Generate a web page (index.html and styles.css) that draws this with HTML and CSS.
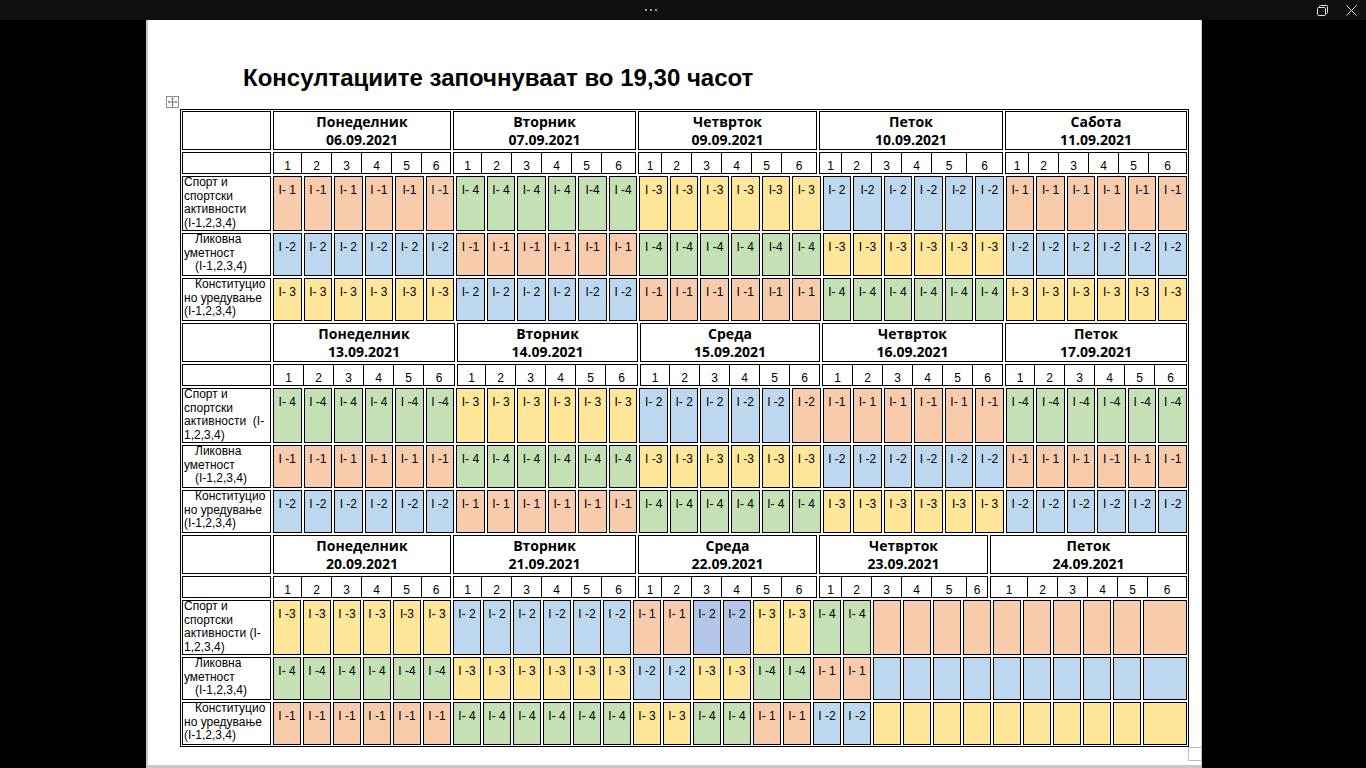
FILE: index.html
```html
<!DOCTYPE html>
<html lang="mk">
<head>
<meta charset="utf-8">
<title>Консултации</title>
<link rel="stylesheet" href="styles.css">
</head>
<body>
<div class="topbar">
  <div class="dots"><i></i><i></i><i></i></div>
  <div class="winctl">
    <svg class="ico" width="11" height="11" viewBox="0 0 11 11"><path d="M2.5 2.5V1.5a1 1 0 0 1 1-1h6a1 1 0 0 1 1 1v6a1 1 0 0 1-1 1H8.5" fill="none" stroke="#e2e2e2"/><rect x="0.5" y="2.5" width="8" height="8" rx="1" fill="none" stroke="#e2e2e2"/></svg>
    <svg class="ico" width="11" height="11" viewBox="0 0 11 11"><path d="M0.5 0.5l10 10M10.5 0.5l-10 10" stroke="#e2e2e2"/></svg>
  </div>
</div>
<div class="page">
  <h1 class="title">Консултациите започнуваат во 19,30 часот</h1>
  <div class="tbl">
    <span class="move"><svg width="11" height="10" viewBox="0 0 11 11"><path d="M5.5 1.5v8M1.5 5.5h8" stroke="#6a6a6a"/><path d="M5.5 0.3L3.9 2h3.2zM5.5 10.7L3.9 9h3.2zM0.3 5.5L2 3.9v3.2zM10.7 5.5L9 3.9v3.2z" fill="#6a6a6a"/></svg></span>

    <div class="sec s1">
      <div class="hrow">
        <div class="cell"></div>
        <div class="cell day">Понеделник<br>06.09.2021</div>
        <div class="cell day">Вторник<br>07.09.2021</div>
        <div class="cell day">Четврток<br>09.09.2021</div>
        <div class="cell day">Петок<br>10.09.2021</div>
        <div class="cell day">Сабота<br>11.09.2021</div>
      </div>
      <div class="hrow nrow">
        <div class="cell"></div>
        <div class="cell nums"><span>1</span><span>2</span><span>3</span><span>4</span><span>5</span><span>6</span></div>
        <div class="cell nums"><span>1</span><span>2</span><span>3</span><span>4</span><span>5</span><span>6</span></div>
        <div class="cell nums f22"><span>1</span><span>2</span><span>3</span><span>4</span><span>5</span><span>6</span></div>
        <div class="cell nums f21"><span>1</span><span>2</span><span>3</span><span>4</span><span>5</span><span>6</span></div>
        <div class="cell nums f22"><span>1</span><span>2</span><span>3</span><span>4</span><span>5</span><span>6</span></div>
      </div>
      <div class="crow r1">
        <div class="cell lab"><div>Спорт и</div><div>спортски</div><div>активности</div><div>(I-1,2,3,4)</div></div>
        <div class="c or">I- 1</div><div class="c or">I -1</div><div class="c or">I- 1</div><div class="c or">I -1</div><div class="c or">I-1</div><div class="c or">I -1</div>
        <div class="c gr">I- 4</div><div class="c gr">I- 4</div><div class="c gr">I- 4</div><div class="c gr">I- 4</div><div class="c gr">I-4</div><div class="c gr">I -4</div>
        <div class="c ye">I -3</div><div class="c ye">I -3</div><div class="c ye">I -3</div><div class="c ye">I -3</div><div class="c ye">I-3</div><div class="c ye">I- 3</div>
        <div class="c bl">I- 2</div><div class="c bl">I-2</div><div class="c bl">I- 2</div><div class="c bl">I -2</div><div class="c bl">I-2</div><div class="c bl">I -2</div>
        <div class="c or">I- 1</div><div class="c or">I- 1</div><div class="c or">I- 1</div><div class="c or">I- 1</div><div class="c or">I-1</div><div class="c or">I -1</div>
      </div>
      <div class="crow r2">
        <div class="cell lab"><div class="ind">Ликовна</div><div>уметност</div><div class="ind">(I-1,2,3,4)</div></div>
        <div class="c bl">I -2</div><div class="c bl">I- 2</div><div class="c bl">I- 2</div><div class="c bl">I -2</div><div class="c bl">I- 2</div><div class="c bl">I -2</div>
        <div class="c or">I -1</div><div class="c or">I -1</div><div class="c or">I -1</div><div class="c or">I- 1</div><div class="c or">I-1</div><div class="c or">I- 1</div>
        <div class="c gr">I -4</div><div class="c gr">I -4</div><div class="c gr">I -4</div><div class="c gr">I- 4</div><div class="c gr">I-4</div><div class="c gr">I- 4</div>
        <div class="c ye">I -3</div><div class="c ye">I -3</div><div class="c ye">I -3</div><div class="c ye">I -3</div><div class="c ye">I -3</div><div class="c ye">I -3</div>
        <div class="c bl">I -2</div><div class="c bl">I -2</div><div class="c bl">I- 2</div><div class="c bl">I -2</div><div class="c bl">I -2</div><div class="c bl">I -2</div>
      </div>
      <div class="crow r3">
        <div class="cell lab"><div class="ind">Конституцио</div><div>но уредување</div><div>(I-1,2,3,4)</div></div>
        <div class="c ye">I- 3</div><div class="c ye">I- 3</div><div class="c ye">I- 3</div><div class="c ye">I- 3</div><div class="c ye">I-3</div><div class="c ye">I -3</div>
        <div class="c bl">I- 2</div><div class="c bl">I- 2</div><div class="c bl">I- 2</div><div class="c bl">I- 2</div><div class="c bl">I-2</div><div class="c bl">I -2</div>
        <div class="c or">I -1</div><div class="c or">I -1</div><div class="c or">I -1</div><div class="c or">I -1</div><div class="c or">I-1</div><div class="c or">I- 1</div>
        <div class="c gr">I- 4</div><div class="c gr">I- 4</div><div class="c gr">I- 4</div><div class="c gr">I- 4</div><div class="c gr">I- 4</div><div class="c gr">I- 4</div>
        <div class="c ye">I- 3</div><div class="c ye">I- 3</div><div class="c ye">I- 3</div><div class="c ye">I- 3</div><div class="c ye">I-3</div><div class="c ye">I -3</div>
      </div>
    </div>

    <div class="sec s2">
      <div class="hrow">
        <div class="cell"></div>
        <div class="cell day">Понеделник<br>13.09.2021</div>
        <div class="cell day">Вторник<br>14.09.2021</div>
        <div class="cell day">Среда<br>15.09.2021</div>
        <div class="cell day">Четврток<br>16.09.2021</div>
        <div class="cell day">Петок<br>17.09.2021</div>
      </div>
      <div class="hrow nrow">
        <div class="cell"></div>
        <div class="cell nums f29"><span>1</span><span>2</span><span>3</span><span>4</span><span>5</span><span>6</span></div>
        <div class="cell nums"><span>1</span><span>2</span><span>3</span><span>4</span><span>5</span><span>6</span></div>
        <div class="cell nums f28"><span>1</span><span>2</span><span>3</span><span>4</span><span>5</span><span>6</span></div>
        <div class="cell nums f29"><span>1</span><span>2</span><span>3</span><span>4</span><span>5</span><span>6</span></div>
        <div class="cell nums f28"><span>1</span><span>2</span><span>3</span><span>4</span><span>5</span><span>6</span></div>
      </div>
      <div class="crow r1">
        <div class="cell lab"><div>Спорт и</div><div>спортски</div><div>активности&nbsp; (I-</div><div>1,2,3,4)</div></div>
        <div class="c gr">I- 4</div><div class="c gr">I -4</div><div class="c gr">I- 4</div><div class="c gr">I- 4</div><div class="c gr">I -4</div><div class="c gr">I -4</div>
        <div class="c ye">I- 3</div><div class="c ye">I- 3</div><div class="c ye">I- 3</div><div class="c ye">I- 3</div><div class="c ye">I- 3</div><div class="c ye">I- 3</div>
        <div class="c bl">I- 2</div><div class="c bl">I- 2</div><div class="c bl">I- 2</div><div class="c bl">I -2</div><div class="c bl">I -2</div><div class="c or">I -2</div>
        <div class="c or">I -1</div><div class="c or">I- 1</div><div class="c or">I- 1</div><div class="c or">I -1</div><div class="c or">I- 1</div><div class="c or">I -1</div>
        <div class="c gr">I -4</div><div class="c gr">I -4</div><div class="c gr">I -4</div><div class="c gr">I -4</div><div class="c gr">I -4</div><div class="c gr">I -4</div>
      </div>
      <div class="crow r2">
        <div class="cell lab"><div class="ind">Ликовна</div><div>уметност</div><div class="ind">(I-1,2,3,4)</div></div>
        <div class="c or">I -1</div><div class="c or">I -1</div><div class="c or">I- 1</div><div class="c or">I- 1</div><div class="c or">I- 1</div><div class="c or">I -1</div>
        <div class="c gr">I- 4</div><div class="c gr">I- 4</div><div class="c gr">I- 4</div><div class="c gr">I- 4</div><div class="c gr">I- 4</div><div class="c gr">I- 4</div>
        <div class="c ye">I -3</div><div class="c ye">I -3</div><div class="c ye">I- 3</div><div class="c ye">I -3</div><div class="c ye">I -3</div><div class="c ye">I -3</div>
        <div class="c bl">I -2</div><div class="c bl">I -2</div><div class="c bl">I -2</div><div class="c bl">I -2</div><div class="c bl">I -2</div><div class="c bl">I -2</div>
        <div class="c or">I -1</div><div class="c or">I- 1</div><div class="c or">I- 1</div><div class="c or">I -1</div><div class="c or">I- 1</div><div class="c or">I -1</div>
      </div>
      <div class="crow r3">
        <div class="cell lab"><div class="ind">Конституцио</div><div>но уредување</div><div>(I-1,2,3,4)</div></div>
        <div class="c bl">I -2</div><div class="c bl">I -2</div><div class="c bl">I -2</div><div class="c bl">I -2</div><div class="c bl">I -2</div><div class="c bl">I -2</div>
        <div class="c or">I- 1</div><div class="c or">I- 1</div><div class="c or">I- 1</div><div class="c or">I- 1</div><div class="c or">I- 1</div><div class="c or">I -1</div>
        <div class="c gr">I- 4</div><div class="c gr">I- 4</div><div class="c gr">I- 4</div><div class="c gr">I- 4</div><div class="c gr">I- 4</div><div class="c gr">I- 4</div>
        <div class="c ye">I -3</div><div class="c ye">I -3</div><div class="c ye">I -3</div><div class="c ye">I -3</div><div class="c ye">I-3</div><div class="c ye">I- 3</div>
        <div class="c bl">I -2</div><div class="c bl">I -2</div><div class="c bl">I -2</div><div class="c bl">I -2</div><div class="c bl">I -2</div><div class="c bl">I -2</div>
      </div>
    </div>

    <div class="sec s3">
      <div class="hrow">
        <div class="cell"></div>
        <div class="cell day">Понеделник<br>20.09.2021</div>
        <div class="cell day">Вторник<br>21.09.2021</div>
        <div class="cell day">Среда<br>22.09.2021</div>
        <div class="cell day">Четврток<br>23.09.2021</div>
        <div class="cell day">Петок<br>24.09.2021</div>
      </div>
      <div class="hrow nrow">
        <div class="cell"></div>
        <div class="cell nums"><span>1</span><span>2</span><span>3</span><span>4</span><span>5</span><span>6</span></div>
        <div class="cell nums"><span>1</span><span>2</span><span>3</span><span>4</span><span>5</span><span>6</span></div>
        <div class="cell nums f22"><span>1</span><span>2</span><span>3</span><span>4</span><span>5</span><span>6</span></div>
        <div class="cell nums f21"><span>1</span><span>2</span><span>3</span><span>4</span><span>5</span><span>6</span></div>
        <div class="cell nums f36"><span>1</span><span>2</span><span>3</span><span>4</span><span>5</span><span>6</span></div>
      </div>
      <div class="crow r1">
        <div class="cell lab"><div>Спорт и</div><div>спортски</div><div>активности (I-</div><div>1,2,3,4)</div></div>
        <div class="c ye">I -3</div><div class="c ye">I -3</div><div class="c ye">I -3</div><div class="c ye">I -3</div><div class="c ye">I-3</div><div class="c ye">I- 3</div>
        <div class="c bl">I- 2</div><div class="c bl">I- 2</div><div class="c bl">I- 2</div><div class="c bl">I -2</div><div class="c bl">I -2</div><div class="c bl">I -2</div>
        <div class="c or">I- 1</div><div class="c or">I- 1</div><div class="c bd">I- 2</div><div class="c bd">I- 2</div><div class="c ye">I- 3</div><div class="c ye">I- 3</div>
        <div class="c gr">I- 4</div><div class="c gr">I- 4</div><div class="c or"></div><div class="c or"></div><div class="c or"></div><div class="c or"></div>
        <div class="c or"></div><div class="c or"></div><div class="c or"></div><div class="c or"></div><div class="c or"></div><div class="c or"></div>
      </div>
      <div class="crow r2">
        <div class="cell lab"><div class="ind">Ликовна</div><div>уметност</div><div class="ind">(I-1,2,3,4)</div></div>
        <div class="c gr">I- 4</div><div class="c gr">I -4</div><div class="c gr">I- 4</div><div class="c gr">I- 4</div><div class="c gr">I -4</div><div class="c gr">I -4</div>
        <div class="c ye">I -3</div><div class="c ye">I -3</div><div class="c ye">I- 3</div><div class="c ye">I -3</div><div class="c ye">I -3</div><div class="c ye">I -3</div>
        <div class="c bl">I -2</div><div class="c bl">I -2</div><div class="c ye">I -3</div><div class="c ye">I -3</div><div class="c gr">I -4</div><div class="c gr">I -4</div>
        <div class="c or">I- 1</div><div class="c or">I- 1</div><div class="c bl"></div><div class="c bl"></div><div class="c bl"></div><div class="c bl"></div>
        <div class="c bl"></div><div class="c bl"></div><div class="c bl"></div><div class="c bl"></div><div class="c bl"></div><div class="c bl"></div>
      </div>
      <div class="crow r3">
        <div class="cell lab"><div class="ind">Конституцио</div><div>но уредување</div><div>(I-1,2,3,4)</div></div>
        <div class="c or">I -1</div><div class="c or">I -1</div><div class="c or">I -1</div><div class="c or">I -1</div><div class="c or">I -1</div><div class="c or">I -1</div>
        <div class="c gr">I- 4</div><div class="c gr">I- 4</div><div class="c gr">I- 4</div><div class="c gr">I- 4</div><div class="c gr">I- 4</div><div class="c gr">I- 4</div>
        <div class="c ye">I- 3</div><div class="c ye">I- 3</div><div class="c gr">I- 4</div><div class="c gr">I- 4</div><div class="c or">I- 1</div><div class="c or">I- 1</div>
        <div class="c bl">I -2</div><div class="c bl">I -2</div><div class="c ye"></div><div class="c ye"></div><div class="c ye"></div><div class="c ye"></div>
        <div class="c ye"></div><div class="c ye"></div><div class="c ye"></div><div class="c ye"></div><div class="c ye"></div><div class="c ye"></div>
      </div>
    </div>

    <span class="rsz"></span>
  </div>
</div>
</body>
</html>
```

FILE: styles.css
```css
* { box-sizing: border-box; }
html, body { margin: 0; padding: 0; }
body {
  width: 1366px;
  height: 768px;
  overflow: hidden;
  background: #000;
  font-family: "Liberation Sans", Arial, sans-serif;
  color: #000;
}

/* viewer title bar */
.topbar {
  height: 20px;
  background: #0f0f0f;
  display: flex;
  align-items: center;
}
.dots { display: flex; gap: 3px; margin-left: 645px; }
.dots i { display: block; width: 2px; height: 2px; background: #9c9c9c; }
.winctl { margin-left: auto; margin-right: 9px; display: flex; align-items: center; gap: 18px; }
.ico { display: block; }

/* document page */
.page {
  margin-left: 146px;
  width: 1056px;
  height: 748px;
  background: #fff;
  border-left: 2px solid #c8c8c8;
  border-right: 1px solid #c8c8c8;
  border-bottom: 3px solid #c8c8c8;
  padding-top: 44px;
}
.title {
  margin: 0 0 0 95px;
  font: bold 24px/28px "Liberation Sans", Arial, sans-serif;
}

/* table */
.tbl {
  position: relative;
  width: 1009px;
  margin: 17px 0 0 32px;
  border: 1px solid #000;
  padding: 1px;
  display: flex;
  flex-direction: column;
  gap: 2px;
}
.sec { display: flex; flex-direction: column; gap: 2px; }

.hrow { display: grid; gap: 2px; height: 39px; }
.nrow { height: 22px; }
.s1 .hrow { grid-template-columns: 89px 178px 183px 179px 184px 1fr; }
.s2 .hrow { grid-template-columns: 89px 182px 181px 180px 181px 1fr; }
.s3 .hrow { grid-template-columns: 89px 178px 183px 179px 169px 1fr; }

.cell { border: 1px solid #000; background: #fff; }

.day {
  font: bold 14px/18px "Open Sans", "Noto Sans", sans-serif;
  text-align: center;
  padding-top: 1px;
  white-space: nowrap;
}

.nums {
  display: grid;
  grid-template-columns: 27px repeat(4, 30px) 1fr;
  font-size: 12px;
  line-height: 13px;
}
.nums span { text-align: center; padding-top: 7px; }
.nums span + span { border-left: 1px solid #000; }
.nums.f21 { grid-template-columns: 21px 30px 30px 30px 35px 1fr; }
.nums.f22 { grid-template-columns: 22px repeat(4, 30px) 1fr; }
.nums.f28 { grid-template-columns: 28px repeat(4, 30px) 1fr; }
.nums.f29 { grid-template-columns: 29px repeat(4, 30px) 1fr; }
.nums.f36 { grid-template-columns: 36px repeat(4, 30px) 1fr; }

.crow {
  display: grid;
  grid-template-columns: 89px repeat(30, 1fr);
  gap: 2px;
}
.s3 .crow { grid-template-columns: 89px repeat(29, 28px) 1fr; }
.r1 { height: 55px; }
.r2, .r3 { height: 43px; }

.lab {
  font-size: 12px;
  line-height: 13.5px;
  padding-left: 1px;
  white-space: nowrap;
  overflow: hidden;
}
.lab div:first-child { margin-top: -1px; }
.lab .ind { padding-left: 11px; }

.c {
  border: 1px solid #000;
  font-size: 12px;
  line-height: 13px;
  text-align: center;
  padding-top: 7px;
  white-space: nowrap;
  overflow: hidden;
}
.or { background: #f8cbad; }
.gr { background: #c5e0b4; }
.ye { background: #ffe699; }
.bl { background: #bdd7ee; }
.bd { background: #b4c6e7; }

/* table handles (overlay) */
.move {
  position: absolute;
  left: -15px;
  top: -14px;
  width: 13px;
  height: 12px;
  border: 1px solid #8c8c8c;
  background: #fff;
  display: flex;
  align-items: center;
  justify-content: center;
}
.move svg { display: block; }
.rsz {
  position: absolute;
  right: -14px;
  bottom: -15px;
  width: 14px;
  height: 14px;
  border: 1px solid #bdbdbd;
  background: #fff;
}
```
